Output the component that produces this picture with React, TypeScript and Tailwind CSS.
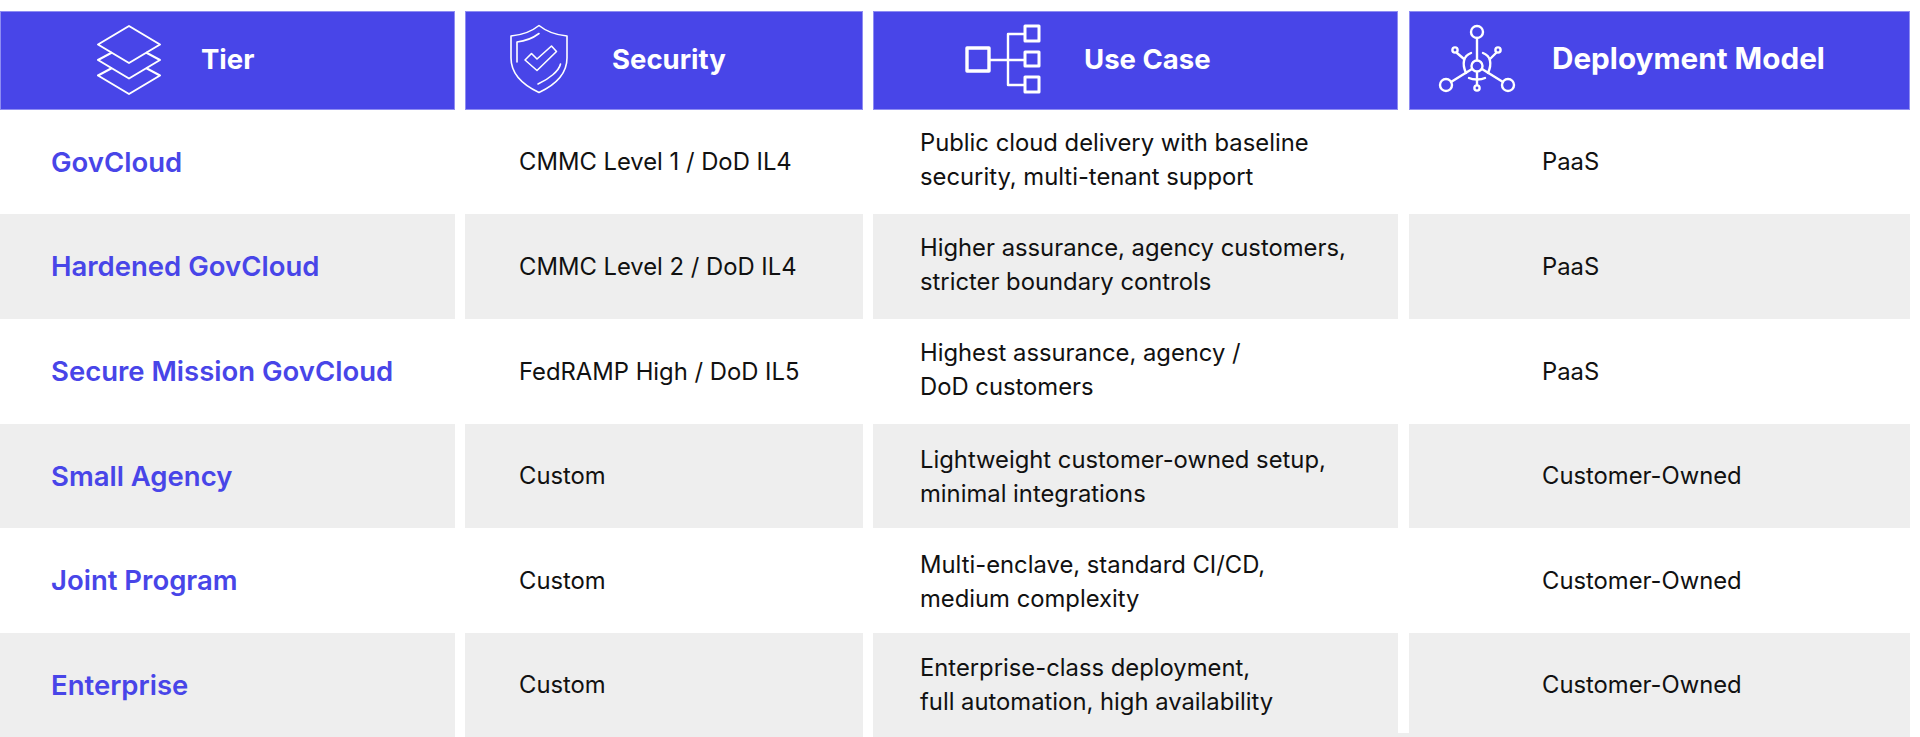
import React from "react"

const LayersIcon = () => (
  <svg width="66" height="72" viewBox="0 0 66 72" fill="none" stroke="white" strokeWidth="2" strokeLinejoin="round">
    <path d="M33 3 L64 21.5 L33 40 L2 21.5 Z" />
    <path d="M16 29.5 L2 37 L33 55.5 L64 37 L50 29.5" />
    <path d="M16 45 L2 52.5 L33 71 L64 52.5 L50 45" />
  </svg>
)

const ShieldIcon = () => (
  <svg width="60" height="70" viewBox="0 0 60 70" fill="none" stroke="white" strokeWidth="1.6" strokeLinecap="round" strokeLinejoin="round">
    <path d="M30 1.5 C38 8 47 11 58 12 V34 C58 50 46 61 30 68.5 C14 61 2 50 2 34 V12 C13 11 22 8 30 1.5 Z" />
    <path d="M8 38 V18 C17 17 24 14 30 9.5" />
    <path d="M29 60 C40 55 50 47 51.5 40" />
    <path d="M16 36 L22.5 29.5 L28 35 L42.5 22 L47.5 27.5 L28 46.5 Z" />
  </svg>
)

const TreeIcon = () => (
  <svg width="76" height="70" viewBox="0 0 76 70" fill="none" stroke="white" strokeWidth="2.4" strokeLinejoin="round">
    <rect x="2" y="24" width="22" height="23" strokeWidth="3.4" />
    <rect x="60" y="2" width="14" height="15" strokeWidth="3" />
    <rect x="60" y="28" width="14" height="14" strokeWidth="3" />
    <rect x="60" y="53" width="14" height="15" strokeWidth="3" />
    <path d="M25 36 H60 M60 10 H43 V61 H60" />
  </svg>
)

const NetworkIcon = () => (
  <svg width="78" height="72" viewBox="0 0 78 72" fill="none" stroke="white" strokeWidth="2.4" strokeLinecap="round">
    <circle cx="39" cy="9" r="6" />
    <circle cx="8" cy="62" r="6" />
    <circle cx="70" cy="62" r="6" />
    <circle cx="39" cy="43" r="5.5" />
    <circle cx="17" cy="27" r="2.6" />
    <circle cx="60" cy="27" r="2.6" />
    <circle cx="39" cy="65" r="2.6" />
    <path d="M39 15 V37 M39 49 V62 M13 59 L34 46 M65 59 L44 46 M19 30 L26 36 M58 30 L52 36" />
    <path d="M28 50 C24 41 25 33 33 30 M45 30 C53 33 54 41 50 50 M31 55 C35 57 43 57 47 55" />
  </svg>
)

const headers = [
  { title: "Tier", Icon: LayersIcon, className: "pl-[95px] gap-[39px] text-[27.5px]", textClass: "mt-[2px]" },
  { title: "Security", Icon: ShieldIcon, className: "pl-[43px] gap-[43px] text-[27.5px]", textClass: "mt-[2px]" },
  { title: "Use Case", Icon: TreeIcon, className: "pl-[91px] gap-[43px] text-[27.5px] mr-px", textClass: "mt-[2px]" },
  { title: "Deployment Model", Icon: NetworkIcon, className: "pl-[28px] gap-[36px] text-[29.7px]", textClass: "-mt-[2px]" },
]

const rows = [
  { cells: ["GovCloud", "CMMC Level 1 / DoD IL4", "Public cloud delivery with baseline\nsecurity, multi-tenant support", "PaaS"], useCasePad: "pb-[4px]" },
  { cells: ["Hardened GovCloud", "CMMC Level 2 / DoD IL4", "Higher assurance, agency customers,\nstricter boundary controls", "PaaS"], useCasePad: "pb-[3px]" },
  { cells: ["Secure Mission GovCloud", "FedRAMP High / DoD IL5", "Highest assurance, agency /\nDoD customers", "PaaS"], useCasePad: "pb-[3px]" },
  { cells: ["Small Agency", "Custom", "Lightweight customer-owned setup,\nminimal integrations", "Customer-Owned"], useCasePad: "pt-[2px]" },
  { cells: ["Joint Program", "Custom", "Multi-enclave, standard CI/CD,\nmedium complexity", "Customer-Owned"], useCasePad: "pt-[2px]" },
  { cells: ["Enterprise", "Custom", "Enterprise-class deployment,\nfull automation, high availability", "Customer-Owned"], useCasePad: "pb-[1px]" },
]

const App = () => {
  return (
    <div className="relative w-[1920px] h-[737px] overflow-hidden bg-white pt-[11px] font-['Inter',sans-serif]">
      <div className="grid grid-cols-[455px_398px_526px_501px] gap-x-[10px] grid-rows-[99px_104px_105px_105px_104px_105px_104px]">
        {/* Header */}
        {headers.map(({ title, Icon, className, textClass }) => (
          <div
            key={title}
            className={`flex items-center pb-[3px] bg-[#4845E8] border border-[#8E8CF2] text-white font-bold ${className}`}
          >
            <Icon />
            <span className={textClass}>{title}</span>
          </div>
        ))}

        {/* Rows */}
        {rows.map(({ cells, useCasePad }, i) => {
          const bg = i % 2 === 1 ? "bg-[#EEEEEE]" : "bg-white"
          return (
            <React.Fragment key={cells[0]}>
              <div className={`flex items-center pl-[51px] pt-[1px] text-[27.5px] font-semibold text-[#4845E8] ${bg}`}>
                {cells[0]}
              </div>
              <div className={`flex items-center pl-[54px] text-[23.8px] text-[#111111] ${bg}`}>
                {cells[1]}
              </div>
              <div className={`flex items-center pl-[47px] mr-px text-[23.8px] leading-[34px] text-[#111111] whitespace-pre-line ${useCasePad} ${bg}`}>
                {cells[2]}
              </div>
              <div className={`flex items-center pl-[133px] text-[23.8px] text-[#111111] ${bg}`}>
                {cells[3]}
              </div>
            </React.Fragment>
          )
        })}
      </div>

      {/* the white gutter stops just short of the bottom edge */}
      <div className="absolute left-[1398px] top-[733px] w-[11px] h-[4px] bg-[#EEEEEE]" />
    </div>
  )
}

export default App
